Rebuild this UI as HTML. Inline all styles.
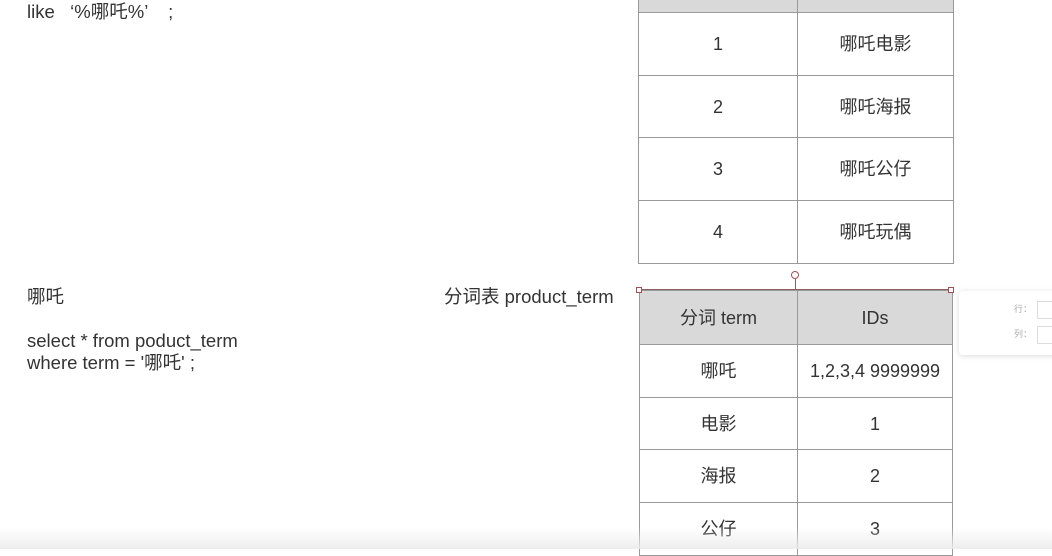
<html><head><style>
body{margin:0;width:1052px;height:549px;overflow:hidden;background:#fff;font-family:"Liberation Sans","Noto Sans CJK SC",sans-serif;color:#333;position:relative}
.t{position:absolute;font-size:18.5px;white-space:nowrap;line-height:22px}
table{position:absolute;border-collapse:collapse;font-size:18px;color:#333}
td{border:1px solid #9a9a9a;text-align:center;padding:0;line-height:22px}
</style></head><body>
<div class="t" style="left:27px;top:1px">like &nbsp;&nbsp;‘%哪吒%’ &nbsp;&nbsp;&nbsp;;</div>
<div class="t" style="left:27px;top:286px">哪吒</div>
<div class="t" style="left:444px;top:286px">分词表 product_term</div>
<div class="t" style="left:27px;top:330px;line-height:22px">select * from poduct_term<br>where term = '哪吒' ;</div>
<table style="left:638px;top:-51px;width:316px">
<tr style="height:63px;background:#d9d9d9"><td style="width:158px"></td><td></td></tr>
<tr style="height:63px"><td>1</td><td>哪吒电影</td></tr>
<tr style="height:62px"><td>2</td><td>哪吒海报</td></tr>
<tr style="height:63px"><td>3</td><td>哪吒公仔</td></tr>
<tr style="height:63px"><td>4</td><td>哪吒玩偶</td></tr>
</table>
<table style="left:639px;top:290px;width:314px">
<tr style="height:54px;background:#d9d9d9"><td style="width:157px">分词 term</td><td>IDs</td></tr>
<tr style="height:53px"><td>哪吒</td><td>1,2,3,4 9999999</td></tr>
<tr style="height:52px"><td>电影</td><td>1</td></tr>
<tr style="height:53px"><td>海报</td><td>2</td></tr>
<tr style="height:53px"><td>公仔</td><td>3</td></tr>
</table>
<div style="position:absolute;left:638px;top:289px;width:314px;height:1px;background:#8a6060"></div>
<div style="position:absolute;left:795px;top:279px;width:1px;height:11px;background:#8a6060"></div>
<div style="position:absolute;left:791px;top:271px;width:6px;height:6px;border:1px solid #a05050;border-radius:50%;background:#fff"></div>
<div style="position:absolute;left:636px;top:287px;width:4px;height:4px;border:1px solid #a05050;background:#fff"></div>
<div style="position:absolute;left:948px;top:287px;width:4px;height:4px;border:1px solid #a05050;background:#fff"></div>
<div style="position:absolute;left:959px;top:291px;width:100px;height:64px;background:#fff;border-radius:4px;box-shadow:0 1px 6px rgba(0,0,0,.15)"></div>
<div class="t" style="left:1014px;top:304px;font-size:9px;line-height:11px;color:#aaa">行：</div>
<div class="t" style="left:1014px;top:329px;font-size:9px;line-height:11px;color:#aaa">列：</div>
<div style="position:absolute;left:1037px;top:301px;width:20px;height:16px;border:1px solid #ddd"></div>
<div style="position:absolute;left:1037px;top:326px;width:20px;height:16px;border:1px solid #ddd"></div>
<div style="position:absolute;left:0;top:528px;width:1052px;height:21px;background:linear-gradient(rgba(255,255,255,0),rgba(235,235,235,.9))"></div>
</body></html>
